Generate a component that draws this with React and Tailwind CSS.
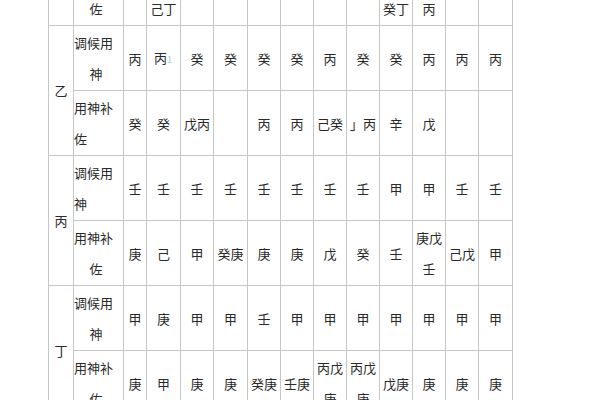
const font = { fontFamily: '"Noto Sans CJK SC", "Noto Sans", sans-serif' };

// each row: stem (only on first row of a pair), label, and 12 month cells
// mid: whether the second line of the label sits centred under the first
const rows = [
  { stem: '', label: ['用神补', '佐'], mid: 1, top: true, cells: ['', '庚戊\n己丁', '丙', '庚丁', '癸', '丁', '庚', '丙丁', '庚戊\n癸丁', '庚戊\n丙', '丁', '丁庚'] },
  { stem: '乙', label: ['调候用', '神'], mid: 1, cells: ['丙', '丙¹', '癸', '癸', '癸', '癸', '丙', '癸', '癸', '丙', '丙', '丙'] },
  { label: ['用神补', '佐'], mid: 0, cells: ['癸', '癸', '戊丙', '', '丙', '丙', '己癸', '」丙', '辛', '戊', '', ''] },
  { stem: '丙', label: ['调候用', '神'], mid: 0, cells: ['壬', '壬', '壬', '壬', '壬', '壬', '壬', '壬', '甲', '甲', '壬', '壬'] },
  { label: ['用神补', '佐'], mid: 1, cells: ['庚', '己', '甲', '癸庚', '庚', '庚', '戊', '癸', '壬', '庚戊\n壬', '己戊', '甲'] },
  { stem: '丁', label: ['调候用', '神'], mid: 1, cells: ['甲', '庚', '甲', '甲', '壬', '甲', '甲', '甲', '甲', '甲', '甲', '甲'] },
  { label: ['用神补', '佐'], mid: 1, cells: ['庚', '甲', '庚', '庚', '癸庚', '壬庚', '丙戊\n庚', '丙戊\n庚', '戊庚', '庚', '庚', '庚'] },
];

const Cell = ({ text, top }) => {
  const lines = text.split('\n');
  const lift = top && lines.length === 1;
  return (
    <div className={`bg-white flex flex-col items-center justify-center text-center leading-[31px] ${lift ? 'pb-[7px]' : ''}`}>
      {lines.map((l, i) =>
        l.endsWith('¹') ? (
          <span key={i} className="pr-px">
            {l.slice(0, -1)}
            <span className="text-[9px] text-[#8fd0e6] align-middle">1</span>
          </span>
        ) : (
          <span key={i}>{l}</span>
        )
      )}
    </div>
  );
};

const Label = ({ lines, mid }) => (
  <div className="bg-white flex flex-col justify-center leading-[31px]">
    <div className="w-[44px] text-left">{lines[0]}</div>
    <div className={mid === 1 ? 'w-[44px] text-center' : 'w-[44px] text-left'}>{lines[1]}</div>
  </div>
);

export default function App() {
  return (
    <div className="w-[600px] h-[400px] overflow-hidden bg-white text-[13px] text-[#2a2a2a]" style={font}>
      <div className="-mt-[40px] ml-[48px] w-fit p-px bg-[#c6c6c6] grid gap-px grid-cols-[24px_49px_22px_33px_32px_33px_32px_32px_32px_32px_32px_32px_32px_33px] grid-rows-[repeat(7,64px)]">
        {rows.map((r, ri) => (
          <div key={ri} className="contents">
            {r.stem !== undefined && (
              <div className={`bg-white flex items-center justify-center ${ri === 0 ? 'row-span-1' : 'row-span-2'}`}>
                {r.stem}
              </div>
            )}
            <Label lines={r.label} mid={r.mid} />
            {r.cells.map((c, ci) => (
              <Cell key={ci} text={c} top={r.top} />
            ))}
          </div>
        ))}
      </div>
    </div>
  );
}
